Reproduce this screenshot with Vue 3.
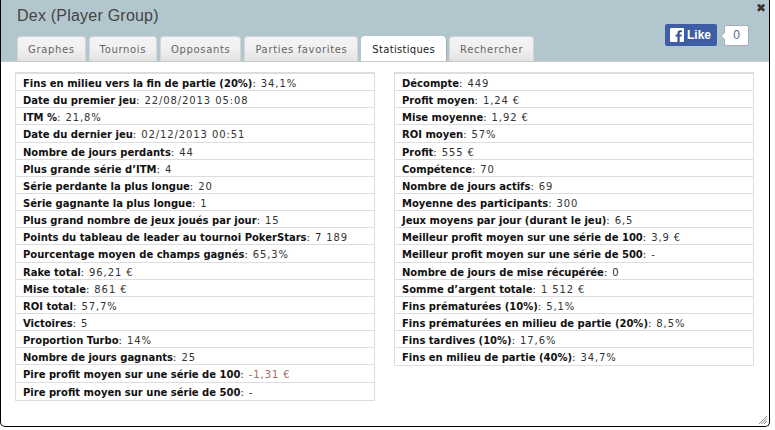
<script setup>
const tabs = ['Graphes', 'Tournois', 'Opposants', 'Parties favorites', 'Statistiques', 'Rechercher']
const left = [
  ['Fins en milieu vers la fin de partie (20%)', '34,1%'],
  ['Date du premier jeu', '22/08/2013 05:08'],
  ['ITM %', '21,8%'],
  ['Date du dernier jeu', '02/12/2013 00:51'],
  ['Nombre de jours perdants', '44'],
  ['Plus grande série d’ITM', '4'],
  ['Série perdante la plus longue', '20'],
  ['Série gagnante la plus longue', '1'],
  ['Plus grand nombre de jeux joués par jour', '15'],
  ['Points du tableau de leader au tournoi PokerStars', '7 189'],
  ['Pourcentage moyen de champs gagnés', '65,3%'],
  ['Rake total', '96,21 €'],
  ['Mise totale', '861 €'],
  ['ROI total', '57,7%'],
  ['Victoires', '5'],
  ['Proportion Turbo', '14%'],
  ['Nombre de jours gagnants', '25'],
  ['Pire profit moyen sur une série de 100', '-1,31 €', true],
  ['Pire profit moyen sur une série de 500', '-'],
]
const right = [
  ['Décompte', '449'],
  ['Profit moyen', '1,24 €'],
  ['Mise moyenne', '1,92 €'],
  ['ROI moyen', '57%'],
  ['Profit', '555 €'],
  ['Compétence', '70'],
  ['Nombre de jours actifs', '69'],
  ['Moyenne des participants', '300'],
  ['Jeux moyens par jour (durant le jeu)', '6,5'],
  ['Meilleur profit moyen sur une série de 100', '3,9 €'],
  ['Meilleur profit moyen sur une série de 500', '-'],
  ['Nombre de jours de mise récupérée', '0'],
  ['Somme d’argent totale', '1 512 €'],
  ['Fins prématurées (10%)', '5,1%'],
  ['Fins prématurées en milieu de partie (20%)', '8,5%'],
  ['Fins tardives (10%)', '17,6%'],
  ['Fins en milieu de partie (40%)', '34,7%'],
]
</script>

<template>
  <div class="win">
    <header class="head">
      <h1 class="title">Dex (Player Group)</h1>
      <nav class="tabs">
        <span v-for="t in tabs" :key="t" class="tab" :class="{ active: t === 'Statistiques' }">{{ t }}</span>
      </nav>
      <span class="close">✖</span>
      <div class="like">
        <span class="fb">
          <svg width="14" height="14" viewBox="0 0 14 14"><rect width="14" height="14" rx="1" fill="#fff"/><path d="M9.7 14V8.600h1.800l.3-2.100H9.700V5.200c0-.6.2-1 1-1h1.200V2.300c-.2 0-.9-.1-1.700-.1-1.700 0-2.800 1-2.800 2.900v1.400H5.500v2.100h1.900V14z" fill="#3b5998"/></svg>
          Like
        </span>
        <span class="count">0</span>
      </div>
    </header>
    <main class="body">
      <div v-for="(col, i) in [left, right]" :key="i" class="list">
        <div v-for="r in col" :key="r[0]" class="row">
          <b>{{ r[0] }}</b>:<span class="val" :class="{ neg: r[2] }">{{ r[1] }}</span>
        </div>
      </div>
    </main>
    <svg class="grip" width="10" height="10" viewBox="0 0 10 10"><path d="M9 1 1 9M9 3.500 3.500 9M9 6 6 9" stroke="#888" stroke-width="1" fill="none"/></svg>
  </div>
</template>

<style>
html, body { margin: 0; background: #fff; }
</style>

<style scoped>
.win {
  position: relative;
  box-sizing: border-box;
  width: 770px;
  height: 427px;
  background: #fff;
  border: 1px solid #000;
  border-top: 0;
  border-radius: 0 0 5px 5px;
  overflow: hidden;
  font-family: "DejaVu Sans", Verdana, sans-serif;
  font-size: 10px;
  color: #222;
}
.head {
  position: relative;
  height: 61px;
  background: #b2c6cd;
  border-bottom: 1px solid #c8c8c8;
}
.title {
  margin: 0;
  padding: 6px 0 0 16px;
  height: 30px;
  box-sizing: border-box;
  font-family: "Liberation Sans", Arial, sans-serif;
  font-weight: 400;
  font-size: 16px;
  letter-spacing: 0.22px;
  line-height: 20px;
  color: #444;
}
.tabs {
  display: flex;
  gap: 3px;
  padding-left: 16px;
  padding-top: 6px;
}
.tab {
  box-sizing: border-box;
  height: 25px;
  padding: 7px 10px 0 10px;
  background: linear-gradient(#f4f4f4, #f0f0f0 50%, #e2e2e2);
  border: 1px solid #d3d7d8;
  border-bottom: 0;
  border-radius: 4px 4px 0 0;
  color: #666;
  letter-spacing: 0.65px;
  line-height: 12px;
}
.tab.active {
  background: #fff;
  color: #222;
  border-color: #fff;
  letter-spacing: 0.3px;
  box-shadow: 1px 0 0 #9fb0b6;
}
.close {
  position: absolute;
  top: 1px;
  right: 3px;
  font-size: 12px;
  line-height: 14px;
  color: #333;
}
.like {
  position: absolute;
  top: 24px;
  left: 664px;
  display: flex;
  align-items: center;
  gap: 7px;
}
.fb {
  box-sizing: border-box;
  display: flex;
  align-items: center;
  gap: 3px;
  width: 52px;
  height: 22px;
  padding-left: 5px;
  background: #3f5da5;
  border-radius: 2px;
  color: #fff;
  font: bold 12px "Liberation Sans", Arial, sans-serif;
}
.count {
  position: relative;
  box-sizing: border-box;
  width: 25px;
  height: 21px;
  border: 1px solid #a8adb8;
  border-radius: 2px;
  background: #fff;
  color: #56688f;
  text-align: center;
  font: 12px/19px "Liberation Sans", Arial, sans-serif;
}
.count::before {
  content: "";
  position: absolute;
  left: -4px;
  top: 7px;
  width: 5px;
  height: 5px;
  background: #fff;
  border-left: 1px solid #a8adb8;
  border-bottom: 1px solid #a8adb8;
  transform: rotate(45deg) scale(.8);
}
.body {
  display: flex;
  align-items: flex-start;
  gap: 19px;
  padding: 10px 0 0 14px;
}
.list {
  box-sizing: border-box;
  width: 360px;
  border: 1px solid #ddd;
  border-width: 2px 1px 1px;
}
.row {
  box-sizing: border-box;
  height: 17.15px;
  padding: 1px 0 0 7px;
  line-height: 17px;
  border-bottom: 1px solid #ddd;
  white-space: nowrap;
}
.row:last-child { border-bottom: 0; }
.row b { color: #111; }
.val { margin-left: 5px; letter-spacing: 0.9px; color: #333; }
.val.neg { color: #a8665c; }
.grip { position: absolute; right: 1px; bottom: 1px; }
</style>
